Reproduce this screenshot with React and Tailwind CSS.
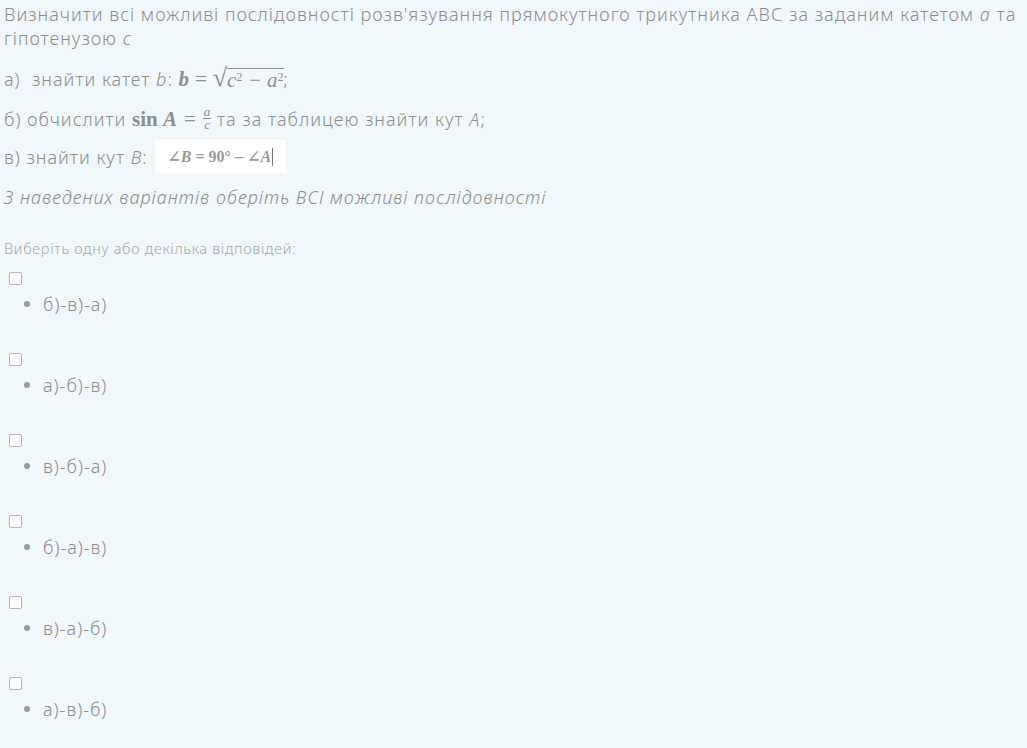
export default function App() {
  const options = ["б)-в)-а)", "а)-б)-в)", "в)-б)-а)", "б)-а)-в)", "в)-а)-б)", "а)-в)-б)"];
  const serif = { fontFamily: '"Liberation Serif", "DejaVu Serif", serif' };
  return (
    <div className="min-h-[748px] w-[1027px] bg-[#f0f8fb] text-[#8e8e8e] pl-[4px] pr-[2px] pt-[2px] font-light tracking-[1px]" style={{ fontFamily: '"Noto Sans", sans-serif' }}>
      <div className="text-[18px] leading-[24px] m-0">
        <div>Визначити всі можливі послідовності розв'язування прямокутного трикутника АВС за заданим катетом <i>а</i> та</div>
        <div>гіпотенузою <i>с</i></div>
      </div>
      <p className="text-[18px] leading-[24px] mt-[14px] flex items-end">
        <span>а)&nbsp; знайти катет <i>b</i>:&nbsp;</span>
        <span className="text-[21px] italic font-bold tracking-normal" style={serif}>b</span>
        <span className="text-[21px] mx-[6px] tracking-normal" style={serif}>=</span>
        <span className="text-[26px] leading-[26px] tracking-normal" style={serif}>√</span>
        <span className="text-[21px] italic border-t border-[#8e8e8e] leading-[22px] tracking-normal mt-[4px]" style={serif}>
          c<sup className="text-[12px] not-italic">2</sup> − a<sup className="text-[12px] not-italic">2</sup>
        </span>
        <span>;</span>
      </p>
      <p className="text-[18px] leading-[24px] mt-[15px] flex items-center">
        <span>б) обчислити&nbsp;</span>
        <span className="text-[21px] font-bold tracking-normal" style={serif}>sin&nbsp;<i>A</i></span>
        <span className="text-[21px] mx-[7px] tracking-normal" style={serif}>=</span>
        <span className="inline-flex flex-col items-center text-[13px] leading-[12px] italic tracking-normal" style={serif}>
          <span className="px-[1px] border-b border-[#8e8e8e]">a</span>
          <span>c</span>
        </span>
        <span>&nbsp;та за таблицею знайти кут <i>А</i>;</span>
      </p>
      <div className="text-[18px] leading-[24px] mt-[9px] flex items-center">
        <span>в) знайти кут <i>В</i>:&nbsp;</span>
        <span className="ml-[2px] bg-white h-[33px] w-[131px] flex items-center pl-[12px] text-[16px] font-bold text-[#9a9a9a] tracking-normal" style={serif}>
          <span>∠<i>B</i> = 90° – ∠<i>A</i></span>
          <span className="inline-block w-px h-[18px] bg-[#777] ml-[1px]"></span>
        </span>
      </div>
      <p className="text-[18px] leading-[24px] mt-[12px] italic">
        З наведених варіантів оберіть ВСІ можливі послідовності
      </p>
      <p className="text-[14.5px] leading-[18px] mt-[30px] text-[#a8a8a8] tracking-[0.7px]">Виберіть одну або декілька відповідей:</p>
      <div className="mt-[14px]">
        {options.map((o, i) => (
          <div key={i} className="h-[81px]">
            <div className="pl-[5px] h-[14px] flex items-center">
              <span className="block w-[13px] h-[13px] border border-[#b5b5b5] rounded-[2px] bg-white"></span>
            </div>
            <div className="flex items-center mt-[7px] pl-[20px] h-[24px] text-[18px]">
              <span className="w-[6px] h-[6px] rounded-full bg-[#9a9a9a] mr-[13px]"></span>
              <span>{o}</span>
            </div>
          </div>
        ))}
      </div>
    </div>
  );
}
